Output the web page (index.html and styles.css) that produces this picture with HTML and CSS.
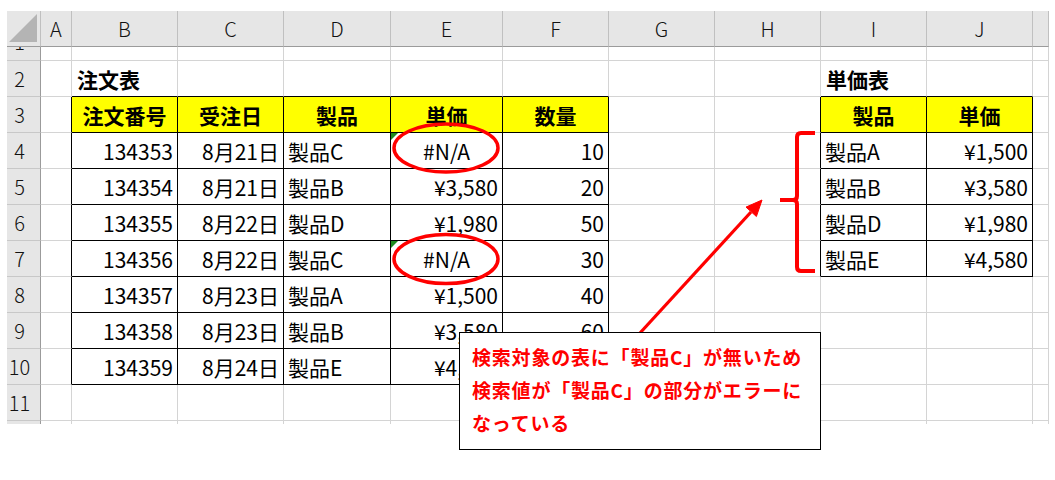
FILE: index.html
```html
<!DOCTYPE html>
<html lang="ja">
<head>
<meta charset="utf-8">
<title>VLOOKUP #N/A</title>
<link rel="stylesheet" href="styles.css">
</head>
<body>
<div class="sheet">
  <!-- header row -->
  <div class="ch corner"><div class="tri"></div></div>
  <div class="ch">A</div><div class="ch">B</div><div class="ch">C</div><div class="ch">D</div><div class="ch">E</div><div class="ch">F</div><div class="ch">G</div><div class="ch">H</div><div class="ch">I</div><div class="ch">J</div><div class="ch"></div>
  <!-- row 1 -->
  <div class="rh r1"><span class="r1n">1</span></div>
  <div></div><div></div><div></div><div></div><div></div><div></div><div></div><div></div><div></div><div></div><div></div>
  <!-- row 2 -->
  <div class="rh">2</div>
  <div></div><div class="tt title">注文表</div><div class="tt"></div><div class="tt"></div><div class="tt"></div><div class="tt"></div><div></div><div></div><div class="tt title">単価表</div><div class="tt"></div><div></div>
  <!-- row 3 -->
  <div class="rh">3</div>
  <div class="tl"></div><div class="t hd">注文番号</div><div class="t hd">受注日</div><div class="t hd">製品</div><div class="t hd">単価</div><div class="t hd">数量</div><div></div><div class="tl"></div><div class="t hd">製品</div><div class="t hd">単価</div><div></div>
  <!-- row 4 -->
  <div class="rh">4</div>
  <div class="tl"></div><div class="t num">134353</div><div class="t num">8月21日</div><div class="t">製品C</div><div class="t ctr err">#N/A</div><div class="t num">10</div><div></div><div class="tl"></div><div class="t">製品A</div><div class="t num">¥1,500</div><div></div>
  <!-- row 5 -->
  <div class="rh">5</div>
  <div class="tl"></div><div class="t num">134354</div><div class="t num">8月21日</div><div class="t">製品B</div><div class="t num">¥3,580</div><div class="t num">20</div><div></div><div class="tl"></div><div class="t">製品B</div><div class="t num">¥3,580</div><div></div>
  <!-- row 6 -->
  <div class="rh">6</div>
  <div class="tl"></div><div class="t num">134355</div><div class="t num">8月22日</div><div class="t">製品D</div><div class="t num">¥1,980</div><div class="t num">50</div><div></div><div class="tl"></div><div class="t">製品D</div><div class="t num">¥1,980</div><div></div>
  <!-- row 7 -->
  <div class="rh">7</div>
  <div class="tl"></div><div class="t num">134356</div><div class="t num">8月22日</div><div class="t">製品C</div><div class="t ctr err">#N/A</div><div class="t num">30</div><div></div><div class="tl"></div><div class="t">製品E</div><div class="t num">¥4,580</div><div></div>
  <!-- row 8 -->
  <div class="rh">8</div>
  <div class="tl"></div><div class="t num">134357</div><div class="t num">8月23日</div><div class="t">製品A</div><div class="t num">¥1,500</div><div class="t num">40</div><div></div><div></div><div></div><div></div><div></div>
  <!-- row 9 -->
  <div class="rh">9</div>
  <div class="tl"></div><div class="t num">134358</div><div class="t num">8月23日</div><div class="t">製品B</div><div class="t num">¥3,580</div><div class="t num">60</div><div></div><div></div><div></div><div></div><div></div>
  <!-- row 10 -->
  <div class="rh">10</div>
  <div class="tl"></div><div class="t num">134359</div><div class="t num">8月24日</div><div class="t">製品E</div><div class="t num">¥4,580</div><div class="t num">70</div><div></div><div></div><div></div><div></div><div></div>
  <!-- row 11 -->
  <div class="rh">11</div>
  <div></div><div></div><div></div><div></div><div></div><div></div><div></div><div></div><div></div><div></div><div></div>
  <!-- row 12 (cut) -->
  <div class="rh last"></div>
  <div class="last"></div><div class="last"></div><div class="last"></div><div class="last"></div><div class="last"></div><div class="last"></div><div class="last"></div><div class="last"></div><div class="last"></div><div class="last"></div><div class="last"></div>
</div>

<svg class="overlay" width="1055" height="480" viewBox="0 0 1055 480">
  <ellipse cx="446" cy="148" rx="52" ry="24" fill="none" stroke="#ff0000" stroke-width="3.5"/>
  <ellipse cx="446" cy="259" rx="52" ry="24.5" fill="none" stroke="#ff0000" stroke-width="3.5"/>
  <path d="M815 133 L801 133 Q797 133 797 137 L797 196 Q797 200 793 200 L780 200 M793 200 Q797 200 797 204 L797 267 Q797 271 801 271 L815 271" fill="none" stroke="#ff0000" stroke-width="4" stroke-linecap="butt"/>
  <line x1="640" y1="333" x2="751" y2="212" stroke="#ff0000" stroke-width="3.2"/>
  <polygon points="762,200 756.4,216.5 746,207.1" fill="#ff0000" stroke="#ff0000" stroke-width="1"/>
</svg>

<div class="callout">
  <div>検索対象の表に「製品C」が無いため</div>
  <div>検索値が「製品C」の部分がエラーに</div>
  <div>なっている</div>
</div>
</body>
</html>
```

FILE: styles.css
```css
html, body {
  margin: 0;
  padding: 0;
  background: #ffffff;
}

body {
  position: relative;
  width: 1055px;
  height: 480px;
  overflow: hidden;
  font-family: "Noto Sans CJK JP", "Noto Sans", sans-serif;
  color: #000;
}

.sheet {
  display: grid;
  grid-template-columns: 34px 31px 106px 106px 107px 112px 106px 106px 106px 106px 106px 16px;
  grid-template-rows: 36px 14px repeat(10, 36px) 3px;
  margin: 11px 0 0 7px;
  width: 1042px;
  font-size: 21px;
}

.sheet > div {
  box-sizing: border-box;
  border-right: 1px solid #d4d4d4;
  border-bottom: 1px solid #d4d4d4;
  display: flex;
  align-items: center;
  padding: 0 4px;
  white-space: nowrap;
  overflow: hidden;
  position: relative;
}

.sheet > .ch {
  background: #e6e6e6;
  border-right-color: #c0c0c0;
  border-bottom-color: #9b9b9b;
  justify-content: center;
  font-size: 20px;
  font-weight: 300;
  color: #111;
}

.sheet > .rh {
  background: #e6e6e6;
  border-bottom-color: #c8c8c8;
  border-right-color: #9b9b9b;
  justify-content: center;
  font-size: 20px;
  font-weight: 300;
  padding: 0 8px 0 0;
  color: #111;
}

.sheet > .corner {
  justify-content: flex-end;
  align-items: flex-end;
  padding: 0 3px 4px 0;
}

.tri {
  width: 28px;
  height: 28px;
  background: #b4b4b4;
  clip-path: polygon(100% 0, 100% 100%, 0 100%);
}

.sheet > .r1 {
  align-items: flex-end;
}

.r1n {
  display: block;
  height: 37px;
  line-height: 37px;
  flex: none;
}

.sheet > .last {
  border-bottom: none;
}

.sheet > .t {
  border-right-color: #000;
  border-bottom-color: #000;
}

.sheet > .tl {
  border-right-color: #000;
}

.sheet > .tt {
  border-bottom-color: #000;
}

.title {
  font-weight: bold;
  padding-left: 5px !important;
}

.sheet > .hd {
  background: #ffff00;
  font-weight: bold;
  justify-content: center;
}

.sheet > .num {
  justify-content: flex-end;
}

.sheet > .ctr {
  justify-content: center;
}

.err::before {
  content: "";
  position: absolute;
  left: 0;
  top: 0;
  width: 0;
  height: 0;
  border-top: 7px solid #1f8a1f;
  border-right: 7px solid transparent;
}

.overlay {
  position: absolute;
  left: 0;
  top: 0;
  pointer-events: none;
}

.callout {
  position: absolute;
  left: 459px;
  top: 332px;
  width: 362px;
  height: 118px;
  box-sizing: border-box;
  border: 1px solid #000;
  background: #fff;
  padding: 7px 0 0 12px;
  color: #ff0000;
  font-weight: bold;
  font-size: 19px;
  line-height: 33px;
  letter-spacing: 0.8px;
  white-space: nowrap;
}
```
